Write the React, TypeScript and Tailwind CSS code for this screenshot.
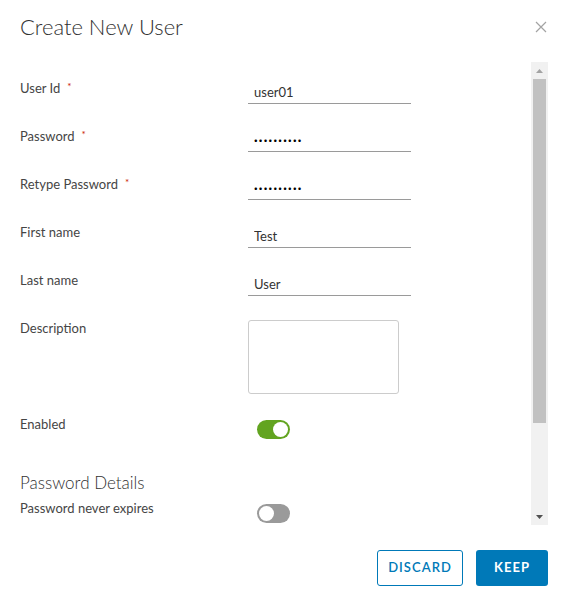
import { useState } from "react";

const FONT = { fontFamily: "Lato, 'Open Sans', sans-serif" };

interface FieldProps {
  label: string;
  required?: boolean;
  value: string;
  masked?: boolean;
}

function Field({ label, required, value, masked }: FieldProps) {
  return (
    <div className="flex h-12 items-start">
      <label className="w-[228px] text-[13px] leading-4 text-[#454545]">
        {label}
        {required && (
          <span className="ml-[7px] align-top text-[10px] leading-3 text-[#c92100]">*</span>
        )}
      </label>
      <input
        type="text"
        readOnly
        defaultValue={masked ? "·".repeat(value.length) : value}
        className={
          "h-6 w-[163px] border-b border-[#9a9a9a] px-[6px] text-[13px] outline-none " +
          (masked ? "font-bold tracking-[1.3px] text-black" : "text-[#333]")
        }
        style={FONT}
      />
    </div>
  );
}

function Toggle({ on, onClick }: { on: boolean; onClick: () => void }) {
  return (
    <button
      onClick={onClick}
      className={
        "ml-[9px] mt-1 flex h-[19px] w-[33px] items-center rounded-full p-[2px] " +
        (on ? "justify-end bg-[#62a420]" : "justify-start bg-[#9a9a9a]")
      }
    >
      <span className="h-[15px] w-[15px] rounded-full bg-white" />
    </button>
  );
}

export default function App() {
  const [enabled, setEnabled] = useState(true);
  const [neverExpires, setNeverExpires] = useState(false);

  return (
    <div className="flex h-[602px] w-[561px] flex-col bg-white" style={FONT}>
      <div className="flex h-[62px] items-start justify-between pl-5 pr-[13px] pt-[13px]">
        <div className="text-[22px] font-light leading-7 text-[#313131]">Create New User</div>
        <button className="mt-[8px] mr-[1px] text-[#a3a3a3]">
          <svg width="12" height="12" viewBox="0 0 12 12" fill="none" stroke="currentColor" strokeWidth="1.2">
            <path d="M1 1L11 11M11 1L1 11" />
          </svg>
        </button>
      </div>

      <div className="flex h-[463px] pl-5 pr-[13px]">
        <div className="flex-1 overflow-hidden pt-[18px]">
          <Field label="User Id" required value="user01" />
          <Field label="Password" required value="1234567890" masked />
          <Field label="Retype Password" required value="1234567890" masked />
          <Field label="First name" value="Test" />
          <Field label="Last name" value="User" />

          <div className="flex items-start">
            <label className="w-[228px] text-[13px] leading-4 text-[#454545]">Description</label>
            <textarea
              readOnly
              className="h-[74px] w-[151px] resize-none rounded-[3px] border border-[#cccccc] outline-none"
            />
          </div>

          <div className="mt-[22px] flex items-start">
            <label className="w-[228px] text-[13px] leading-4 text-[#454545]">Enabled</label>
            <Toggle on={enabled} onClick={() => setEnabled(!enabled)} />
          </div>

          <div className="mt-[33px] text-[17px] font-light leading-[22px] text-[#313131]">
            Password Details
          </div>
          <div className="mt-[6px] flex items-start">
            <label className="w-[228px] text-[13px] leading-4 text-[#454545]">Password never expires</label>
            <Toggle on={neverExpires} onClick={() => setNeverExpires(!neverExpires)} />
          </div>
        </div>

        <div className="flex w-[17px] flex-col items-center bg-[#f1f1f1]">
          <div className="flex h-[17px] w-full items-center justify-center">
            <svg width="7" height="4" viewBox="0 0 7 4">
              <path d="M0 4L3.5 0L7 4Z" fill="#a3a3a3" />
            </svg>
          </div>
          <div className="h-[344px] w-[13px] bg-[#c1c1c1]" />
          <div className="flex-1" />
          <div className="flex h-[17px] w-full items-center justify-center">
            <svg width="7" height="4" viewBox="0 0 7 4">
              <path d="M0 0L7 0L3.5 4Z" fill="#505050" />
            </svg>
          </div>
        </div>
      </div>

      <div className="flex justify-end gap-[13px] pr-[13px] pt-[25px]">
        <button className="h-9 w-[86px] rounded-[3px] border border-[#0079b8] text-[13px] font-semibold tracking-[0.08em] text-[#0079b8]">
          DISCARD
        </button>
        <button className="h-9 w-[72px] rounded-[3px] bg-[#0079b8] text-[13px] font-bold tracking-[0.08em] text-white">
          KEEP
        </button>
      </div>
    </div>
  );
}
